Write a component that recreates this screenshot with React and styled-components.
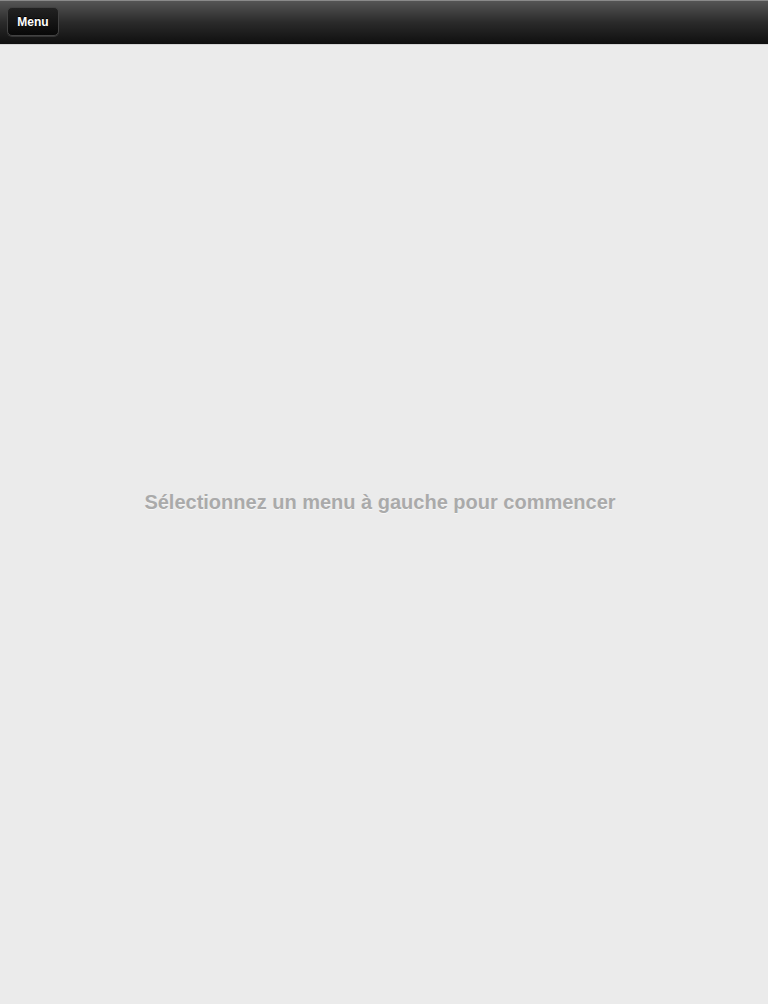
import styled, { createGlobalStyle } from "styled-components";

const GlobalStyle = createGlobalStyle`
  html, body {
    margin: 0;
    padding: 0;
    height: 100%;
    background-color: #ebebeb;
    font-family: "Liberation Sans", Arial, sans-serif;
  }
  #root {
    height: 100%;
  }
`;

const Page = styled.div`
  display: flex;
  flex-direction: column;
  height: 100%;
`;

const Toolbar = styled.header`
  display: flex;
  align-items: flex-start;
  flex-shrink: 0;
  box-sizing: border-box;
  height: 45px;
  padding: 6px 7px 0;
  border-top: 1px solid #8a8a8a;
  border-bottom: 1px solid #d4d4d4;
  background: linear-gradient(#555555, #2a2a2a 50%, #0f0f0f);
`;

const ToolbarButton = styled.button`
  box-sizing: border-box;
  width: 52px;
  height: 29px;
  padding: 0;
  border: 1px solid #424242;
  border-radius: 5px;
  background: linear-gradient(#222222, #080808);
  box-shadow: 0 1px 0 rgba(255, 255, 255, 0.12);
  color: #ffffff;
  font-family: "Liberation Sans", Arial, sans-serif;
  font-size: 12px;
  font-weight: bold;
  text-shadow: 0 -1px 0 #000;
  cursor: pointer;
`;

const Main = styled.main`
  flex: 1;
  display: flex;
  align-items: center;
  justify-content: center;
  padding: 0 8px 44px 0;
`;

const Placeholder = styled.p`
  margin: 0;
  color: #aaaaaa;
  font-size: 20px;
  font-weight: bold;
  text-shadow: 0 1px 0 #f6f6f6;
`;

export default function App() {
  return (
    <>
      <GlobalStyle />
      <Page>
        <Toolbar>
          <ToolbarButton>Menu</ToolbarButton>
        </Toolbar>
        <Main>
          <Placeholder>Sélectionnez un menu à gauche pour commencer</Placeholder>
        </Main>
      </Page>
    </>
  );
}
